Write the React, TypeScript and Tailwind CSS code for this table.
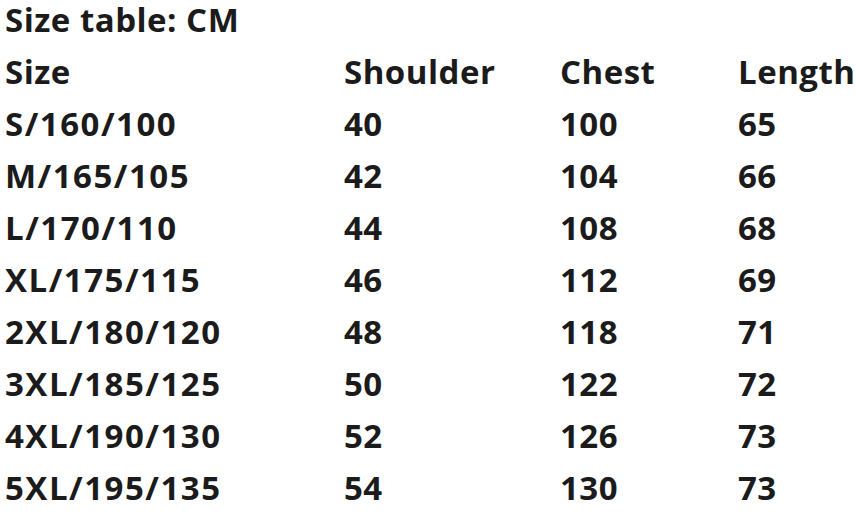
const rows = [
  ["S/160/100", "40", "100", "65"],
  ["M/165/105", "42", "104", "66"],
  ["L/170/110", "44", "108", "68"],
  ["XL/175/115", "46", "112", "69"],
  ["2XL/180/120", "48", "118", "71"],
  ["3XL/185/125", "50", "122", "72"],
  ["4XL/190/130", "52", "126", "73"],
  ["5XL/195/135", "54", "130", "73"],
];

export default function App() {
  return (
    <div className="w-[855px] h-[519px] bg-white text-[#1b1b1b] font-bold pl-[5px] text-[33px] leading-[52px] tracking-[0.5px] [font-family:'Open_Sans',Lato,sans-serif] overflow-hidden">
      <div className="h-[46px] leading-[40px]">Size table: CM</div>
      <div className="grid grid-cols-[339px_216px_178px_1fr]">
        <div>Size</div>
        <div>Shoulder</div>
        <div>Chest</div>
        <div>Length</div>
        {rows.map((r) =>
          r.map((c, i) => (
            <div key={r[0] + i} className={i === 0 ? "tracking-[1.5px]" : ""}>
              {c}
            </div>
          ))
        )}
      </div>
    </div>
  );
}
